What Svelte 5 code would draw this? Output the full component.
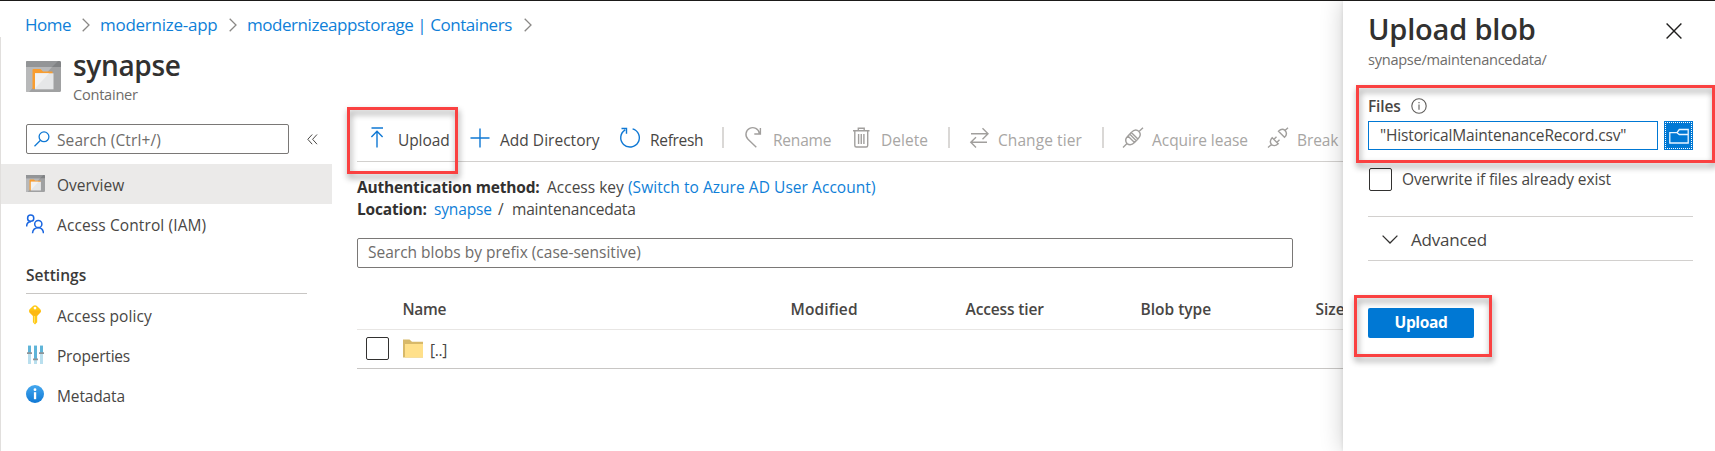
<script>
  const crumbs = [
    { text: 'Home', width: 46, track: -0.5 },
    { text: 'modernize-app', width: 118, track: -0.26 },
    { text: 'modernizeappstorage | Containers', width: 266, track: -0.45 },
  ];
  const nav = [
    { text: 'Overview', icon: 'container', active: true, track: 0 },
    { text: 'Access Control (IAM)', icon: 'people', track: 0.11 },
  ];
  const settings = [
    { text: 'Access policy', icon: 'key', track: 0.06 },
    { text: 'Properties', icon: 'sliders', track: -0.2 },
    { text: 'Metadata', icon: 'info', track: -0.13 },
  ];
  const commands = [
    { text: 'Upload', icon: 'upload', width: 100, label: 27, track: -0.08 },
    { text: 'Add Directory', icon: 'plus', width: 149, label: 29, track: 0.02 },
    { text: 'Refresh', icon: 'refresh', width: 102, label: 30, track: -0.3 },
    { divider: true, width: 23 },
    { text: 'Rename', icon: 'rename', width: 108, label: 28, track: -0.2, disabled: true },
    { text: 'Delete', icon: 'trash', width: 95, label: 28, track: 0.03, disabled: true },
    { divider: true, width: 22 },
    { text: 'Change tier', icon: 'swap', width: 132, label: 28, track: 0.08, disabled: true },
    { divider: true, width: 21 },
    { text: 'Acquire lease', icon: 'plug', width: 145, label: 29, track: -0.04, disabled: true },
    { text: 'Break lease', icon: 'unplug', width: 130, label: 29, track: -0.1, disabled: true },
  ];
  const columns = [
    { text: 'Name', width: 388, track: -0.3 },
    { text: 'Modified', width: 175, track: 0.12 },
    { text: 'Access tier', width: 175, track: -0.12 },
    { text: 'Blob type', width: 175, track: 0 },
    { text: 'Size', width: 60, track: 0 },
  ];
</script>

{#snippet icon(name)}
  {#if name === 'container'}
    <svg class="ic-container" viewBox="0 0 35 31">
      <rect width="35" height="31" rx="1.5" fill="#a0a1a2" />
      <path d="M1.5 0H33.5Q35 0 35 1.5V6H0V1.500Q0 0 1.500 0Z" fill="#808284" />
      <path d="M0 6H26L3 31H1.500Q0 31 0 29.500Z" fill="#b8b9ba" />
      <path d="M1.500 0H32L26 6H0V1.500Q0 0 1.500 0Z" fill="#939597" />
      <path d="M6.500 9Q6.500 8 7.500 8H14.500L17 10.500H26.500V13H9.500V28H6.500Z" fill="#f99d2f" />
      <rect x="9" y="12.300" width="18.500" height="16" fill="#e6e7e8" />
      <path d="M9 12.300H23L9 27.500Z" fill="#f2f2f2" />
    </svg>
  {:else if name === 'people'}
    <svg width="18" height="20" viewBox="0 0 18 20" fill="none" stroke="#1a66e0" stroke-width="1.500">
      <circle cx="4.700" cy="4.200" r="3.100" />
      <path d="M.6 12.500C.7 9.500 2.400 7.800 4.900 7.800" />
      <circle cx="12.300" cy="10" r="3.600" />
      <path d="M6.500 19.300C6.800 15.800 9 13.800 12.300 13.800S17.200 15.800 17.500 19.300" />
    </svg>
  {:else if name === 'key'}
    <svg width="18" height="20" viewBox="0 0 18 20">
      <path d="M7.300 .8Q9 -.4 10.700 .8L14.300 4.300Q15.500 6 14.300 7.600L11.200 10.800V17.200L9 19.400L6.900 17.200V10.800L3.600 7.600Q2.500 6 3.600 4.300Z" fill="#ffc916" />
      <path d="M3.600 5.500H14.800Q15 6.700 14.300 7.600L11.200 10.800H6.900L3.600 7.600Z" fill="#fdb913" />
      <path d="M8 11H9V18.300L8 17.300Z" fill="#ffe06a" />
      <circle cx="9" cy="3.100" r="1.400" fill="#fff" />
    </svg>
  {:else if name === 'sliders'}
    <svg width="18" height="20" viewBox="0 0 18 20">
      <path d="M2 0H5V19H2ZM8 0H11V19H8ZM14 0H17V19H14Z" fill="#b9dfee" />
      <path d="M2 1H5V8H2ZM8 1H11V14H8ZM14 1H17V8H14Z" fill="#5fb4d8" />
      <path d="M1 7.200H6V9H1ZM7 13.500H12V15.200H7ZM13 7.200H18V9H13Z" fill="#8f9496" />
    </svg>
  {:else if name === 'info'}
    <svg width="18" height="18" viewBox="0 0 18 18">
      <defs><linearGradient id="ig" x2="0" y2="1"><stop stop-color="#45a8ef" /><stop offset="1" stop-color="#0f78d4" /></linearGradient></defs>
      <circle cx="9" cy="9" r="9" fill="url(#ig)" />
      <rect x="7.900" y="7.200" width="2.300" height="7" fill="#fff" />
      <circle cx="9" cy="4.700" r="1.400" fill="#fff" />
    </svg>
  {:else if name === 'upload'}
    <svg width="22" height="21" viewBox="0 0 22 21" class="line"><path d="M.5 1H12M6 20.500V4.500M.4 9.900L6 4.300L11.600 9.900" /></svg>
  {:else if name === 'plus'}
    <svg width="22" height="21" viewBox="0 0 22 21" class="line"><path d="M9 1.500V20.500M-.5 11H18.500" /></svg>
  {:else if name === 'refresh'}
    <svg width="22" height="21" viewBox="0 0 22 21" class="line"><path d="M12.600 1.800A9.300 9.300 0 1 1 5.200 2.800M1.500 1.500H6.500V6.700" /></svg>
  {:else if name === 'rename'}
    <svg width="22" height="21" viewBox="0 0 22 21" class="line"><path d="M11.300 20.300L3 12.200A6.700 6.700 0 1 1 14.300 6.500M15.400 1V7H9.300" /></svg>
  {:else if name === 'trash'}
    <svg width="22" height="21" viewBox="0 0 22 21" class="line"><path d="M0 3.800H16.500M5.300 3.500V1.200H11.200V3.500M1.800 4V18.500Q1.800 20 3.300 20H13.200Q14.700 20 14.700 18.500V4M5.600 7V17M8.250 7V17M10.900 7V17" /></svg>
  {:else if name === 'swap'}
    <svg width="22" height="21" viewBox="0 0 22 21" class="line"><path d="M1 6.700H18M12.500 1.200L18 6.700L12.500 12.200M17 15.300H.8M6 10.200L.8 15.300L6 20.400" /></svg>
  {:else if name === 'plug'}
    <svg width="22" height="21" viewBox="0 0 22 21" class="line"><path d="M0 20.500L4 16.500M16 4.500L20 .7M4 16.500C1.500 13.500 2.700 11.200 4.900 9L11.500 15.600C9.300 17.800 6.800 18.900 4 16.500M16 4.500C13.200 2 10.500 3.200 8.300 5.400L14.900 12C17.100 9.800 18.500 7.300 16 4.500M4.900 9L8.300 5.400M11.500 15.600L14.900 12M6.900 7.200L13.300 13.700" /></svg>
  {:else if name === 'unplug'}
    <svg width="22" height="21" viewBox="0 0 22 21" class="line"><path d="M0 20.500L3.500 17.500M17 3.500L20 .7M3.500 17.500C1.500 15 2.200 12.800 4.200 10.800L10.200 16.800C8.200 18.700 6 19.500 3.500 17.500M17 3.500C14.700 1.500 12.300 2.500 10.500 4.300L16.500 10.300C18.400 8.500 19.300 6 17 3.500M6 12.200L8.500 9.800M9 15.200L11.500 12.800" /></svg>
  {/if}
{/snippet}

{#snippet chevron()}
  <svg class="chev" width="8" height="14" viewBox="0 0 8 14"><path d="M.7 .7L7 7L.7 13.300" /></svg>
{/snippet}

<div class="page">
  <nav class="crumbs">
    {#each crumbs as c}
      <a href="#top" style:width="{c.width}px" style:letter-spacing="{c.track}px">{c.text}</a>
      {@render chevron()}
    {/each}
  </nav>

  <header class="head">
    <span class="big">{@render icon('container')}</span>
    <div>
      <h1>synapse</h1>
      <p>Container</p>
    </div>
  </header>

  <div class="body">
    <aside>
      <div class="find">
        <div class="box">
          <svg width="16" height="16" viewBox="0 0 16 16"><circle cx="10" cy="5.800" r="4.900" /><path d="M6.500 9.200L.5 15.300" /></svg>
          <span>Search (Ctrl+/)</span>
        </div>
        <svg class="fold" width="11" height="11" viewBox="0 0 11 11"><path d="M5.200 .5L.8 5.300L5.200 10.200M10 .5L5.600 5.300L10 10.200" /></svg>
      </div>
      {#each nav as n}
        <div class="item" class:active={n.active}>
          <span class="slot">{@render icon(n.icon)}</span>
          <span class="label" style:letter-spacing="{n.track}px">{n.text}</span>
        </div>
      {/each}
      <h2>Settings</h2>
      {#each settings as n}
        <div class="item">
          <span class="slot">{@render icon(n.icon)}</span>
          <span class="label" style:letter-spacing="{n.track}px">{n.text}</span>
        </div>
      {/each}
    </aside>

    <main>
      <div class="toolbar">
        {#each commands as c}
          {#if c.divider}
            <div class="divider" style:width="{c.width}px"></div>
          {:else}
            <div class="cmd" class:disabled={c.disabled} style:width="{c.width}px">
              <span style:width="{c.label}px">{@render icon(c.icon)}</span>
              <span class="label" style:letter-spacing="{c.track}px">{c.text}</span>
            </div>
          {/if}
        {/each}
      </div>
      <div class="meta">
        <div><b>Authentication method:</b><span class="key">Access key</span><a href="#auth">(Switch to Azure AD User Account)</a></div>
        <div><b class="loc">Location:</b><a class="root" href="#root">synapse</a><span class="slash">/</span><span class="dir">maintenancedata</span></div>
      </div>
      <div class="prefix">Search blobs by prefix (case-sensitive)</div>
      <div class="thead">
        {#each columns as c}
          <span style:width="{c.width}px" style:letter-spacing="{c.track}px">{c.text}</span>
        {/each}
      </div>
      <div class="row">
        <span class="check"></span>
        <svg width="20" height="19" viewBox="0 0 20 19"><path d="M0 .5H6.500L9 2.800H20V18.500H0Z" fill="#d8b969" /><rect x="2" y="5" width="18" height="13.500" fill="#ffe08a" /></svg>
        <span class="up">[..]</span>
      </div>
    </main>
  </div>

  <section class="panel">
    <div class="title">
      <div>
        <h1>Upload blob</h1>
        <p>synapse/maintenancedata/</p>
      </div>
      <svg width="16" height="16" viewBox="0 0 16 16"><path d="M.6 .6L15.400 15.400M15.400 .6L.6 15.400" /></svg>
    </div>
    <div class="files">
      <span>Files</span>
      <svg width="16" height="16" viewBox="0 0 16 16"><circle cx="8" cy="8" r="7.200" /><path d="M8 6.500V11.800M8 4V5.200" /></svg>
    </div>
    <div class="pick">
      <div class="file">"HistoricalMaintenanceRecord.csv"</div>
      <button class="browse" aria-label="Browse">
        <svg width="20" height="16" viewBox="0 0 20 16"><path d="M.8 4.700H8L10.300 1.500H19.200V15H.8ZM8 4.700L10.300 6.500H19.200" /></svg>
      </button>
    </div>
    <div class="over"><span class="check"></span><span>Overwrite if files already exist</span></div>
    <div class="adv">
      <svg width="16" height="9" viewBox="0 0 16 9"><path d="M.6 .6L8 8L15.400 .6" /></svg>
      <span>Advanced</span>
    </div>
    <button class="go">Upload</button>
  </section>

  <div class="mark m1"></div>
  <div class="mark m2"></div>
  <div class="mark m3"></div>
</div>

<style>
  :global(body) { background: #fff; overflow: hidden; }
  .page { position: relative; box-sizing: border-box; width: 1715px; height: 451px; overflow: hidden; border-top: 1px solid #1b1a19; background: #fff; font: 15.5px/20px "Open Sans", "Noto Sans", sans-serif; color: #484644; white-space: nowrap; }
  .page * { box-sizing: border-box; }
  h1, h2, p { margin: 0; }
  a { color: #0f7fd8; text-decoration: none; }
  svg { display: block; flex: none; fill: none; }
  .crumbs { display: flex; align-items: center; height: 36px; padding: 11px 0 0 25px; font-size: 17px; line-height: 26px; }
  .crumbs a { flex: none; }
  .chev { margin: 0 10px 0 11px; stroke: #8a8886; stroke-width: 1.300; }
  .head { display: flex; height: 76px; padding-left: 25px; border-left: 1px solid #e1dfdd; }
  .big { padding-top: 24px; width: 47px; flex: none; }
  .big :global(.ic-container) { width: 35px; height: 31px; }
  .head h1 { padding-top: 9px; font-size: 28px; line-height: 38px; font-weight: 600; letter-spacing: -.32px; color: #323130; }
  .head p { font-size: 14.600px; line-height: 20px; letter-spacing: -.25px; color: #6e6c6a; }
  .body { display: flex; height: 338px; border-left: 1px solid #e1dfdd; }
  aside { width: 331px; flex: none; }
  .find { display: flex; align-items: center; height: 51px; padding: 2px 0 0 25px; }
  .box { display: flex; align-items: center; width: 263px; height: 30px; margin-bottom: 3px; margin-top: 2px; padding-left: 7px; border: 1px solid #7a7876; border-radius: 2px; color: #6e6c6a; gap: 7px; letter-spacing: .1px; }
  .box span { padding-top: 1px; }
  .box svg { stroke: #0f78d4; stroke-width: 1.300; }
  .fold { margin-left: 18px; stroke: #4a4846; stroke-width: 1; }
  .item { display: flex; align-items: center; height: 40px; padding-left: 25px; }
  .item.active { background: #ebeae9; }
  .label { padding-top: 1px; }
  .slot { width: 31px; height: 20px; flex: none; }
  .slot :global(.ic-container) { width: 19px; height: 17px; margin-top: 1px; }
  h2 { width: 281px; height: 50px; margin-left: 25px; padding-top: 20px; border-bottom: 1px solid #c8c6c4; font-size: 15.500px; line-height: 22px; font-weight: 600; letter-spacing: .03px; color: #3b3a39; }
  h2 + .item { margin-top: 1px; }
  main { width: 1100px; flex: none; padding-left: 25px; }
  .toolbar { display: flex; align-items: center; height: 49px; padding: 4px 0 0 14px; border-bottom: 1px solid #d2d0ce; }
  .cmd { display: flex; align-items: center; flex: none; }
  .cmd > span { flex: none; }
  .cmd :global(.line) { stroke: #0f78d4; stroke-width: 1.400; margin-top: -3px; overflow: visible; }
  .cmd.disabled { color: #a8a6a4; }
  .cmd.disabled :global(.line) { stroke: #a19f9d; }
  .divider { height: 21px; margin-top: -4px; border-left: 2px solid #dad8d6; flex: none; }
  .meta { padding-top: 14px; line-height: 22px; height: 76px; }
  .meta > div { display: flex; }
  b { width: 190px; color: #323130; font-weight: 700; letter-spacing: -.17px; }
  .key { width: 81px; }
  .meta a { letter-spacing: .05px; }
  .loc { width: 77px; }
  .meta .root { width: 64px; letter-spacing: -.16px; }
  .slash { width: 14px; }
  .dir { letter-spacing: -.2px; }
  .prefix { width: 936px; height: 30px; padding: 2px 10px; border: 1px solid #7a7876; border-radius: 2px; color: #6e6c6a; line-height: 22px; }
  .thead { display: flex; height: 62px; padding: 30px 0 0 45.500px; border-bottom: 1px solid #e8e6e4; font-weight: 600; line-height: 22px; width: 1100px; }
  .thead span { flex: none; }
  .row { display: flex; align-items: center; width: 1100px; height: 39px; padding: 0 0 2px 9px; border-bottom: 1px solid #c8c6c4; }
  .check { width: 23px; height: 23px; border: 1px solid #323130; border-radius: 2px; flex: none; }
  .row svg { margin-left: 14px; }
  .up { margin: 3px 0 0 7px; letter-spacing: -.35px; }
  .panel { position: absolute; top: 0; left: 1343px; width: 372px; height: 450px; padding-left: 25px; background: #fff; box-shadow: 0 0 22px rgba(0,0,0,.2), 0 0 4px rgba(0,0,0,.1); }
  .title { display: flex; height: 92px; }
  .title > div { width: 298px; }
  .title h1 { padding-top: 8px; font-size: 29px; line-height: 40px; font-weight: 600; letter-spacing: -.2px; color: #323130; }
  .title p { font-size: 14.600px; line-height: 20px; letter-spacing: -.28px; color: #6e6c6a; }
  .title svg { margin-top: 22px; stroke: #201f1e; stroke-width: 1.400; }
  .files { display: flex; align-items: center; height: 28px; padding-bottom: 2px; font-weight: 600; }
  .files span { width: 43px; letter-spacing: -.15px; }
  .files svg { stroke: #605e5c; stroke-width: 1.100; }
  .pick { display: flex; gap: 6px; height: 29px; }
  .file { width: 290px; height: 29px; padding: 2px 11px; border: 1px solid #0078d4; line-height: 22px; letter-spacing: -.16px; }
  .browse { display: flex; align-items: center; justify-content: center; width: 29px; height: 29px; padding: 0; border: 1px solid #0078d4; background: #0078d4; outline: 1px dotted #fff; outline-offset: -2px; }
  .browse svg { stroke: #e8f4ff; stroke-width: 1.300; }
  .over { display: flex; height: 66px; padding: 18px 0 0 1px; gap: 10px; letter-spacing: -.12px; }
  .over span + span { padding-top: 1px; }
  .adv { display: flex; align-items: center; width: 325px; height: 45px; padding: 2px 0 0 14px; border-top: 1px solid #d2d0ce; border-bottom: 1px solid #d2d0ce; font-size: 17px; letter-spacing: -.22px; }
  .adv svg { margin: 0 13px 0 0; stroke: #323130; stroke-width: 1.300; }
  .go { display: block; width: 106px; height: 30px; margin-top: 47px; padding: 0 0 1px; border: 0; border-radius: 2px; background: #0078d4; color: #fff; font: 700 15.500px/29px "Open Sans", sans-serif; letter-spacing: -.34px; }
  .mark { position: absolute; border: 3px solid #fa4141; filter: drop-shadow(1px 4px 3px rgba(0,0,0,.42)); }
  .m1 { left: 347px; top: 106px; width: 111px; height: 67px; }
  .m2 { left: 1356px; top: 84px; width: 359px; height: 78px; }
  .m3 { left: 1354px; top: 294px; width: 138px; height: 62px; }
</style>
